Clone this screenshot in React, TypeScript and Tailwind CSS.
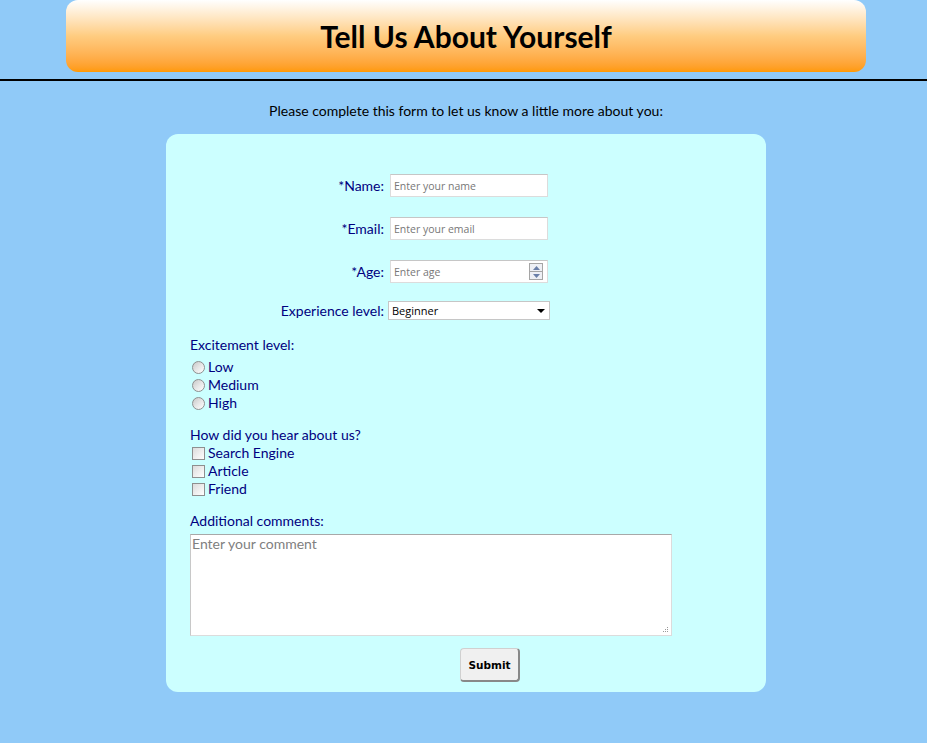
import React from 'react';

const font = "font-['Lato','Open_Sans',sans-serif]";

function Radio({ label }: { label: string }) {
  return (
    <label className="flex h-[18px] items-center">
      <span className="mr-[3px] ml-[2px] inline-block h-[13px] w-[13px] rounded-full border border-[#8e8f8f] bg-gradient-to-br from-[#c8c8c8] via-[#e6e6e6] to-[#ffffff]" />
      <span>{label}</span>
    </label>
  );
}

function Check({ label }: { label: string }) {
  return (
    <label className="flex h-[18px] items-center">
      <span className="mr-[3px] ml-[2px] inline-block h-[13px] w-[13px] border border-[#8e8f8f] bg-gradient-to-br from-[#dcdcdc] to-[#ffffff]" />
      <span>{label}</span>
    </label>
  );
}

function Row({ label, children }: { label: string; children: React.ReactNode }) {
  return (
    <div className="flex items-center">
      <span className="w-[200px] shrink-0 pr-[6px] text-right">{label}</span>
      {children}
    </div>
  );
}

const inputCls =
  "h-[23px] w-[158px] border border-[#dcdcdc] border-t-[#c6c6c6] bg-white px-[3px] text-[10.5px] text-[#777] font-['Open_Sans',sans-serif] flex items-center";

export default function App() {
  return (
    <div className={`min-h-[743px] bg-[#90caf8] pl-[5px] ${font} text-[14px] leading-[18px]`}>
      <div className="flex justify-center">
        <div className="flex h-[72px] w-[800px] items-center justify-center rounded-[12px] bg-gradient-to-b from-[#ffffff] via-[#ffcc80] to-[#ff9900]">
          <h1 className="text-[30px] leading-[36px] font-bold text-black">Tell Us About Yourself</h1>
        </div>
      </div>
      <div className="-ml-[5px] mt-[7px] h-[2px] w-[927px] bg-black" />
      <p className="mt-[21px] text-center text-black">
        Please complete this form to let us know a little more about you:
      </p>
      <div className="mx-auto mt-[14px] w-[600px] rounded-[12px] bg-[#ccffff] px-[24px] pt-[40px] pb-[10px] text-[#000080]">
        <div className="flex flex-col gap-[20px]">
          <Row label="*Name:">
            <div className={inputCls}>Enter your name</div>
          </Row>
          <Row label="*Email:">
            <div className={inputCls}>Enter your email</div>
          </Row>
          <Row label="*Age:">
            <div className={`${inputCls} justify-between pr-[4px]`}>
              <span>Enter age</span>
              <span className="flex h-[17px] w-[14px] flex-col border border-[#a5a5a5] bg-[#eef0f5]">
                <span className="flex flex-1 items-center justify-center border-b border-[#a5a5a5]">
                  <svg width="7" height="4" viewBox="0 0 7 4"><path d="M0 4 L3.5 0 L7 4Z" fill="#6a7fa8" /></svg>
                </span>
                <span className="flex flex-1 items-center justify-center">
                  <svg width="7" height="4" viewBox="0 0 7 4"><path d="M0 0 L3.5 4 L7 0Z" fill="#6a7fa8" /></svg>
                </span>
              </span>
            </div>
          </Row>
        </div>
        <div className="mt-[18px] flex h-[19px] items-center">
          <span className="w-[198px] shrink-0 pr-[4px] text-right">Experience level:</span>
          <div className="flex h-[19px] w-[162px] items-center justify-between border border-[#c6c6c6] bg-white pl-[3px] pr-[4px] font-['Open_Sans',sans-serif] text-[11px] text-black">
            <span>Beginner</span>
            <svg width="8" height="4" viewBox="0 0 8 4"><path d="M0 0 L8 0 L4 4Z" fill="#000" /></svg>
          </div>
        </div>

        <div className="mt-[16px]">Excitement level:</div>
        <div className="mt-[4px] flex flex-col">
          <Radio label="Low" />
          <Radio label="Medium" />
          <Radio label="High" />
        </div>

        <div className="mt-[14px]">How did you hear about us?</div>
        <div className="flex flex-col">
          <Check label="Search Engine" />
          <Check label="Article" />
          <Check label="Friend" />
        </div>

        <div className="mt-[14px]">Additional comments:</div>
        <div className="relative mt-[4px] h-[102px] w-[482px] border border-[#dcdcdc] border-t-[#a8a8a8] border-l-[#c8c8c8] bg-white px-[1px] text-[#808080]">
          Enter your comment
          <svg className="absolute right-[2px] bottom-[2px]" width="7" height="7" viewBox="0 0 7 7">
            <rect x="5" y="1" width="1" height="1" fill="#999" />
            <rect x="3" y="3" width="1" height="1" fill="#999" />
            <rect x="5" y="3" width="1" height="1" fill="#999" />
            <rect x="1" y="5" width="1" height="1" fill="#999" />
            <rect x="3" y="5" width="1" height="1" fill="#999" />
            <rect x="5" y="5" width="1" height="1" fill="#999" />
          </svg>
        </div>

        <div className="mt-[12px] flex">
          <button className="ml-[270px] h-[34px] w-[60px] rounded-[4px] border border-[#d0d0d0] border-r-[2px] border-b-[2px] border-r-[#888] border-b-[#888] bg-[#f0f0f0] font-['DejaVu_Sans',sans-serif] text-[10.5px] font-bold text-black">
            Submit
          </button>
        </div>
      </div>
    </div>
  );
}
